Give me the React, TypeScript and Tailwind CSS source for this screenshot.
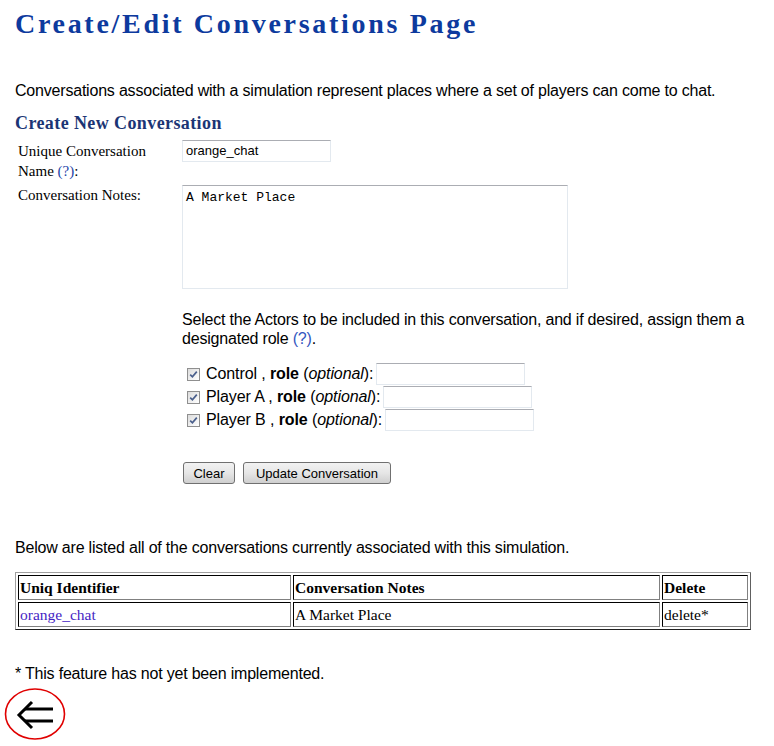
import React from "react";

function Check() {
  return (
    <span className="inline-flex h-[13px] w-[13px] shrink-0 items-center justify-center border border-[#8f8f8f] bg-gradient-to-br from-[#dcdcdc] to-[#ffffff]">
      <svg width="9" height="9" viewBox="0 0 9 9">
        <path d="M1.2 4.6 L3.4 6.8 L7.8 1.6" fill="none" stroke="#4a5f8c" strokeWidth="1.7" />
      </svg>
    </span>
  );
}

function TextBox({ w }: { w: string }) {
  return (
    <span
      className={`inline-block h-[22px] ${w} border border-[#e3e9ef] border-t-[#abadb3] bg-white align-middle`}
    />
  );
}

function Btn({ children, w }: { children: React.ReactNode; w: string }) {
  return (
    <span
      className={`inline-flex h-[22px] ${w} items-center justify-center rounded-[3px] border border-[#707070] bg-gradient-to-b from-[#f2f2f2] via-[#e6e6e6] to-[#cfcfcf] text-[13px] leading-none text-black`}
    >
      {children}
    </span>
  );
}

export default function App() {
  const sans = "font-['Liberation_Sans',Arial,sans-serif]";
  const serif = "font-['Liberation_Serif','Times_New_Roman',serif]";
  const cell =
    "h-[25px] border border-black border-b-[#808080] border-r-[#808080] px-[1px] align-middle leading-[21px]";
  return (
    <div className={`min-h-[746px] w-[774px] bg-white px-[15px] text-black ${sans}`}>
      <h1
        className={`${serif} pt-[8px] text-[28px] font-bold leading-[32px] tracking-[2.7px] text-[#0d3a9e]`}
      >
        Create/Edit Conversations Page
      </h1>

      <p className="mt-[42px] text-[16px] leading-[18px] tracking-[-0.2px]">
        Conversations associated with a simulation represent places where a set of players can come to chat.
      </p>

      <h2
        className={`${serif} mt-[13px] text-[18px] font-bold leading-[20px] tracking-[0.4px] text-[#1b3575]`}
      >
        Create New Conversation
      </h2>

      <div className="mt-[7px] flex flex-col">
        <div className="flex items-start">
          <div className={`${serif} w-[167px] pl-[3px] pt-[1px] text-[15px] leading-[20px]`}>
            Unique Conversation
            <br />
            Name <span className="text-[#2646a8]">(?)</span>:
          </div>
          <div className="flex h-[22px] w-[149px] items-center border border-[#e3e9ef] border-t-[#abadb3] bg-white pl-[3px] text-[13px]">
            orange_chat
          </div>
        </div>

        <div className="mt-[4px] flex items-start">
          <div className={`${serif} w-[167px] pl-[3px] text-[15px] leading-[20px]`}>
            Conversation Notes:
          </div>
          <div className="h-[104px] w-[386px] border border-[#e3e9ef] border-t-[#abadb3] bg-white pl-[3px] pt-[4px] font-['Liberation_Mono','Courier_New',monospace] text-[13px] leading-[15px]">
            A Market Place
          </div>
        </div>
      </div>

      <div className="ml-[167px]">
        <p className="mt-[21px] text-[16px] leading-[19px] tracking-[-0.2px]">
          Select the Actors to be included in this conversation, and if desired, assign them a
          <br />
          designated role <span className="text-[#3356c0]">(?)</span>.
        </p>

        <div className="mt-[15px] flex flex-col gap-[1px] text-[16px] tracking-[-0.1px]">
          {["Control", "Player A", "Player B"].map((n) => (
            <div key={n} className="flex h-[22px] items-center">
              <span className="ml-[5px] mr-[6px]">
                <Check />
              </span>
              <span className="whitespace-pre">
                {n} , <b>role</b> (<i>optional</i>):
              </span>
              <span className="ml-[3px] flex">
                <TextBox w="w-[149px]" />
              </span>
            </div>
          ))}
        </div>

        <div className="mt-[31px] flex gap-[8px] pl-[1px]">
          <Btn w="w-[52px]">Clear</Btn>
          <Btn w="w-[148px]">Update Conversation</Btn>
        </div>
      </div>

      <p className="mt-[55px] text-[16px] leading-[18px] tracking-[-0.2px]">
        Below are listed all of the conversations currently associated with this simulation.
      </p>

      <table
        className={`${serif} mt-[15px] w-[736px] table-fixed border-separate border-spacing-[2px] border border-[#a0a0a0] border-b-[#202020] border-r-[#606060] text-[15.5px]`}
      >
        <tbody>
          <tr>
            <td className={`${cell} w-[273px] font-bold`}>Uniq Identifier</td>
            <td className={`${cell} w-[367px] font-bold`}>Conversation Notes</td>
            <td className={`${cell} w-[86px] font-bold`}>Delete</td>
          </tr>
          <tr>
            <td className={`${cell} text-[#4524c4]`}>orange_chat</td>
            <td className={cell}>A Market Place</td>
            <td className={cell}>delete*</td>
          </tr>
        </tbody>
      </table>

      <p className="mt-[35px] text-[16px] leading-[18px] tracking-[-0.2px]">
        * This feature has not yet been implemented.
      </p>

      <div className="-ml-[11px] mt-[5px]">
        <svg width="64" height="54" viewBox="0 0 64 54">
          <ellipse cx="31" cy="26" rx="29.5" ry="25" fill="none" stroke="#e00000" strokeWidth="1.6" />
          <path d="M28 14 L15 27 L28 40" fill="none" stroke="#000" strokeWidth="3" strokeLinejoin="miter" />
          <line x1="21" y1="21" x2="49" y2="21" stroke="#000" strokeWidth="3" />
          <line x1="21" y1="33" x2="49" y2="33" stroke="#000" strokeWidth="3" />
        </svg>
      </div>
    </div>
  );
}
